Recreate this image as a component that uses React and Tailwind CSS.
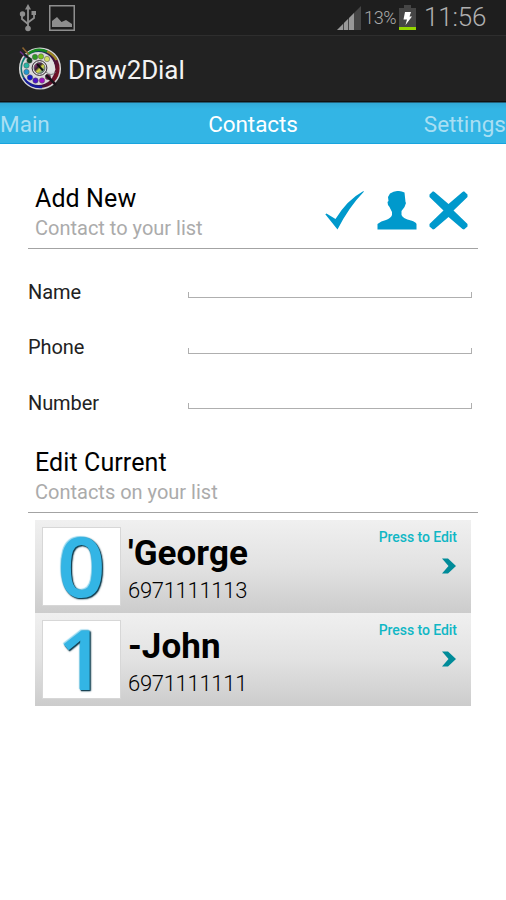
import React from 'react';

const contacts = [
  { id: 0, name: "'George", number: '6971111113' },
  { id: 1, name: '-John', number: '6971111111' },
];

const fields = ['Name', 'Phone', 'Number'];

// Finger holes of the rotary dial
const dialHoles = [
  { x: 23, y: 10.5, color: '#7ac51c' },
  { x: 17, y: 11, color: '#2c9a24' },
  { x: 11.5, y: 14.5, color: '#123f22' },
  { x: 8.5, y: 19.5, color: '#27b5a2' },
  { x: 8.5, y: 26, color: '#2396d0' },
  { x: 12, y: 31.5, color: '#1018c9' },
  { x: 17.5, y: 34.5, color: '#4a12c8' },
  { x: 24, y: 34.5, color: '#a013c0' },
  { x: 30, y: 31, color: '#6d1649' },
  { x: 29, y: 13, color: '#d0dc62' },
];

const DialLogo = () => (
  <svg width="44" height="44" viewBox="0 0 44 44" className="-mt-px shrink-0">
    <defs>
      <linearGradient id="ring" x1="0" y1="0.3" x2="1" y2="0.7">
        <stop offset="0" stopColor="#0e8c78" />
        <stop offset="0.35" stopColor="#173c63" />
        <stop offset="0.7" stopColor="#3c1040" />
        <stop offset="1" stopColor="#8a1218" />
      </linearGradient>
      <linearGradient id="hub" x1="0" y1="0" x2="1" y2="1">
        <stop offset="0" stopColor="#d63bb0" />
        <stop offset="0.4" stopColor="#302030" />
        <stop offset="0.55" stopColor="#d8dc40" />
        <stop offset="1" stopColor="#1b63b8" />
      </linearGradient>
    </defs>
    <circle cx="22" cy="22.5" r="20.3" fill="url(#ring)" stroke="#d4d4d4" strokeWidth="1.5" />
    <path d="M10 8A18.5 18.5 0 0 1 29 5.5" stroke="#168a20" strokeWidth="2.4" fill="none" />
    <path d="M29 5.5A18.5 18.5 0 0 1 38.5 14" stroke="#9a8420" strokeWidth="2.4" fill="none" />
    <path d="M6 32A18.5 18.5 0 0 0 24 41" stroke="#151a9a" strokeWidth="2.4" fill="none" />
    <circle cx="20.5" cy="22.5" r="16.5" fill="#d9d9d9" />
    <path d="M25 9Q36 11 37.500 24Q33 29 28 24Z" fill="#e0e0e0" />
    <path d="M28 26Q33 31 38 26" fill="none" stroke="#666" strokeWidth="0.8" />
    {dialHoles.map((hole) => (
      <circle key={hole.color} cx={hole.x} cy={hole.y} r="2.7" fill={hole.color} stroke="#555" strokeWidth="0.5" />
    ))}
    <circle cx="21.500" cy="22" r="7.4" fill="#e6e6e6" stroke="#332730" strokeWidth="1" />
    <circle cx="21.500" cy="22" r="5.5" fill="url(#hub)" stroke="#555" strokeWidth="0.8" />
    <path d="M19 18L25 24.500" stroke="#111" strokeWidth="2" />
    <path d="M28 29L38 39" stroke="#1a1218" strokeWidth="2.6" />
    <path d="M2 5.500L9 12" stroke="#6a2d83" strokeWidth="1.6" />
    <path d="M4.500 1.500L11 9" stroke="#8c6431" strokeWidth="1.6" />
    <path d="M6 8L12 13" stroke="#15241c" strokeWidth="2.2" />
  </svg>
);

const StatusBar = () => (
  <div className="flex h-9 items-start border-b border-[#2e2e2e] bg-[#1e1e1e] text-[#989898]">
    <svg width="20" height="30" viewBox="0 0 20 30" className="ml-[18px] mt-1" fill="none" stroke="#8e8e8e" strokeWidth="1.8">
      <path d="M10 4V24M4 10V15L10 20M16 10V14L10 18.500" />
      <path d="M10 0L13 5.500H7Z" fill="#8e8e8e" stroke="none" />
      <circle cx="4.500" cy="10" r="2.700" fill="#8e8e8e" stroke="none" />
      <path d="M13.500 7H18V11H13.500Z" fill="#8e8e8e" stroke="none" />
      <circle cx="10" cy="24.500" r="2.800" fill="#8e8e8e" stroke="none" />
    </svg>
    <svg width="26" height="26" viewBox="0 0 26 26" className="ml-[11px] mt-[5px]">
      <path d="M0.750 0.750H25.250V25.250H0.750Z" fill="none" stroke="#8e8e8e" strokeWidth="1.500" />
      <path d="M3 22V16L8 12L12.500 17L17 15L23 19V22Z" fill="#8e8e8e" />
    </svg>
    <svg width="24" height="24" viewBox="0 0 24 24" className="ml-auto mt-[6px]">
      <path d="M0 24L24 0V24Z" fill="#454545" />
      <path d="M0 24L6 18V24ZM7 24V17L11 13V24ZM12 24V12L17 7V24Z" fill="#989898" />
    </svg>
    <span className="ml-[3px] mt-[7px] w-[35px] whitespace-nowrap text-[18px] font-light leading-[22px] tracking-[-0.3px] text-[#acacac]">13%</span>
    <svg width="17" height="25" viewBox="0 0 17 25" className="mt-[5px]">
      <path d="M0 3H5V0H12V3H17V22H0Z" fill="#454545" />
      <path d="M0 22H17V25H0Z" fill="#94d500" />
      <path d="M6 7H12L10.500 11.500H13L6.500 20L8 14.500H4.500Z" fill="#fff" />
    </svg>
    <span className="ml-[8px] mr-[19px] mt-[2px] w-[63px] whitespace-nowrap text-[26px] font-light leading-[31px] tracking-[-0.2px] text-[#b0b0b0]">11:56</span>
  </div>
);

const TabStrip = () => (
  <div className="flex h-[42px] items-center justify-between border-b border-[#18a4de] border-t border-t-[#235f78] bg-[#33b5e5] bg-linear-to-b from-[#31a9d7] to-[#33b5e5] to-15% pt-[2px] text-[22.5px] leading-[28px] text-[#a9dff3]">
    <span className="w-[208px]">Main</span>
    <span className="tracking-[-0.1px] text-white">Contacts</span>
    <span className="w-[208px] text-right">Settings</span>
  </div>
);

const SectionHeader = ({ title, subtitle, children }) => (
  <div className="mx-7 flex h-[65px] justify-between border-b border-[#a3a3a3] pl-[7px]">
    <div>
      <h2 className="text-[25px] leading-[30px] tracking-[0.1px]">{title}</h2>
      <p className="text-[20px] leading-[29px] text-[#ababab]">{subtitle}</p>
    </div>
    {children}
  </div>
);

const HeaderActions = () => (
  <div className="mr-[9px] mt-[7px] flex gap-3 text-[#0099cc]">
    <svg width="40" height="42" viewBox="0 0 40 42" fill="currentColor">
      <path d="M0.300 23.300L1.500 22.500L10.500 28Q22 9 38.500 0L38.800 0.800Q24 16 12.500 38.500Z" />
    </svg>
    <svg width="40" height="42" viewBox="0 0 40 42" fill="currentColor">
      <path d="M13 2.500Q20-2 27.500 1.500L28.500 11L29 12L27.500 16L24.500 20V24Q26 27.500 34 29.500Q39 31 39.500 33V38.500H0.500V33Q4 30 9 29Q14 27 15 24V21L12.500 16L11 14L10.500 11L11.500 10L11 6Z" />
    </svg>
    <svg width="40" height="42" viewBox="0 0 40 42" fill="currentColor">
      <path d="M0.500 3.500L4 0.300L5.500 1L19.500 13L33.500 1L35 0.300L38.500 3.500V6L24.500 19.500L38.500 33V35.500L35 38.500L33.500 38L19.500 26L5.500 38L4 38.500L0.500 35.500V33L14.500 19.500L0.500 6Z" />
    </svg>
  </div>
);

const ContactRow = ({ contact }) => (
  <div className="flex h-[93px] bg-linear-to-b from-[#f0f0f0] via-[#e2e2e2] to-[#cccccc] pl-[7px] pr-[14px] pt-[7px]">
    <div className="flex h-[79px] w-[79px] items-center justify-center border border-[#d7d7d7] bg-white font-['Open_Sans',sans-serif] text-[84px] font-semibold leading-[71px] text-[#33b5e5] [text-shadow:1px_1px_1px_#123f51,1px_1px_2px_#123f51,-1px_-1px_1px_#8fd8f2]">
      <span className="-mt-[4px]">{contact.id}</span>
    </div>
    <div className="ml-[7px] flex-1">
      <div className="mt-[7px] text-[35px] font-bold leading-[40px] tracking-[0.05px]">{contact.name}</div>
      <div className="mt-[3px] text-[22px] font-light leading-[28px] tracking-[-0.3px]">{contact.number}</div>
    </div>
    <div className="flex flex-col items-end">
      <span className="mt-px text-[14px] font-medium leading-[19px] tracking-[-0.05px] text-[#10b7c5]">Press to Edit</span>
      <svg width="14" height="16" viewBox="0 0 14 16" className="mr-px mt-[11px]">
        <path d="M0 0.500H6L14 8L6 15.500H0L6.500 8Z" fill="#008b99" />
      </svg>
    </div>
  </div>
);

const App = () => {
  return (
    <div className="h-[900px] w-[506px] overflow-hidden bg-white font-[Roboto,sans-serif] text-black">
      <StatusBar />

      <header className="flex h-[66px] items-center border-b border-[#111] bg-[#222222] pl-[18px]">
        <DialLogo />
        <h1 className="ml-[6px] mt-[2px] text-[26px] leading-[32px] tracking-[-0.1px] text-[#f3f3f3]">Draw2Dial</h1>
      </header>

      <TabStrip />

      <main className="pt-10">
        <SectionHeader title="Add New" subtitle="Contact to your list">
          <HeaderActions />
        </SectionHeader>

        <form className="mt-[15px] pl-7">
          {fields.map((field) => (
            <label key={field} className="flex h-[55.500px] items-center">
              <span className="w-40 text-[20px] leading-[26px] tracking-[-0.1px] text-[#222]">{field}</span>
              <span className="mt-[7px] h-[6px] w-[284px] border border-t-0 border-[#afafaf]" />
            </label>
          ))}
        </form>

        <div className="mt-[17px]">
          <SectionHeader title="Edit Current" subtitle="Contacts on your list" />
        </div>

        <div className="ml-[35px] mt-[7px] w-[436px]">
          {contacts.map((contact) => (
            <ContactRow key={contact.id} contact={contact} />
          ))}
        </div>
      </main>
    </div>
  );
};

export default App;
